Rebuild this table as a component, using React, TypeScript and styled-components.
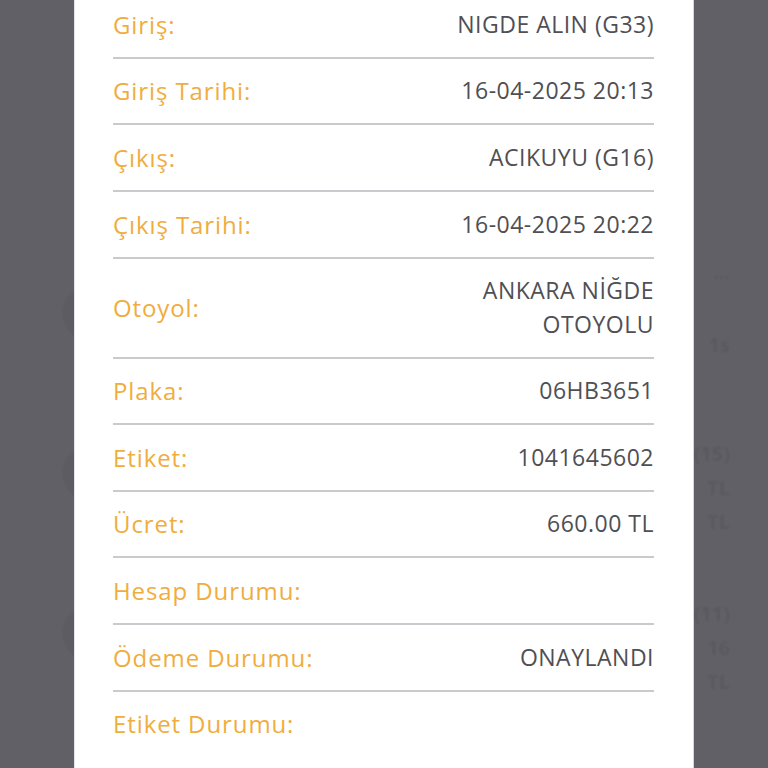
import React from "react";
import styled, { createGlobalStyle } from "styled-components";

const Global = createGlobalStyle`
  html, body { margin: 0; padding: 0; }
  body {
    width: 768px;
    height: 768px;
    overflow: hidden;
    background: #ffffff;
    font-family: "Open Sans", "Noto Sans", sans-serif;
  }
`;

const Page = styled.div`
  width: 768px;
  height: 768px;
  overflow: hidden;
  background: #ffffff;
  filter: blur(1.2px);
`;

const PageHeader = styled.div`
  height: 233px;
`;

const Item = styled.div<{ $shift: number }>`
  height: 160px;
  display: flex;
  align-items: center;
  justify-content: space-between;
  padding: 0 38px 0 62px;
  box-sizing: border-box;
  & > div:last-child { margin-top: ${(p) => p.$shift}px; }
`;

const Avatar = styled.div`
  width: 54px;
  height: 54px;
  border-radius: 50%;
  background: #f1f1f1;
`;

const ItemText = styled.div`
  display: flex;
  flex-direction: column;
  align-items: flex-end;
  font-size: 20px;
  line-height: 34px;
  color: #e8e8e8;
  font-weight: 700;
`;

const Overlay = styled.div`
  position: fixed;
  inset: 0;
  background: rgba(20, 20, 30, 0.68);
  display: flex;
  justify-content: center;
  align-items: flex-start;
  overflow: hidden;
`;

const Modal = styled.div`
  width: 620px;
  margin-top: -8px;
  background: #ffffff;
  border-right: 1px solid #d6d6da;
  border-left: 1px solid #e4e4e6;
  box-sizing: border-box;
  padding: 0 39px 40px 38px;
`;

const Row = styled.div`
  display: flex;
  justify-content: space-between;
  align-items: center;
  padding: 15.67px 0;
  border-bottom: 2px solid #cacace;
  &:last-child { border-bottom: none; }
`;

const Label = styled.div`
  font-size: 24px;
  line-height: 33.33px;
  color: #f0ad3e;
  letter-spacing: 0.9px;
  white-space: nowrap;
`;

const Value = styled.div`
  font-size: 23px;
  line-height: 33.33px;
  color: #4f4f54;
  text-align: right;
  letter-spacing: 0.5px;
`;

const rows: { label: string; value: React.ReactNode }[] = [
  { label: "Giriş:", value: "NIGDE ALIN (G33)" },
  { label: "Giriş Tarihi:", value: "16-04-2025 20:13" },
  { label: "Çıkış:", value: "ACIKUYU (G16)" },
  { label: "Çıkış Tarihi:", value: "16-04-2025 20:22" },
  {
    label: "Otoyol:",
    value: (
      <>
        ANKARA NİĞDE
        <br />
        OTOYOLU
      </>
    ),
  },
  { label: "Plaka:", value: "06HB3651" },
  { label: "Etiket:", value: "1041645602" },
  { label: "Ücret:", value: "660.00 TL" },
  { label: "Hesap Durumu:", value: "" },
  { label: "Ödeme Durumu:", value: "ONAYLANDI" },
  { label: "Etiket Durumu:", value: "" },
];

const items: { lines: string[]; shift: number }[] = [
  { lines: ["···", "", "1s"], shift: -5 },
  { lines: ["(15)", "TL", "TL"], shift: 30 },
  { lines: ["(11)", "16", "TL"], shift: 30 },
];

export default function App() {
  return (
    <>
      <Global />
      <Page>
        <PageHeader />
        {items.map((it, i) => (
          <Item key={i} $shift={it.shift}>
            <Avatar />
            <ItemText>
              {it.lines.map((t, j) => (
                <span key={j}>{t || "\u00a0"}</span>
              ))}
            </ItemText>
          </Item>
        ))}
      </Page>
      <Overlay>
        <Modal>
          {rows.map((r) => (
            <Row key={r.label}>
              <Label>{r.label}</Label>
              <Value>{r.value}</Value>
            </Row>
          ))}
        </Modal>
      </Overlay>
    </>
  );
}
